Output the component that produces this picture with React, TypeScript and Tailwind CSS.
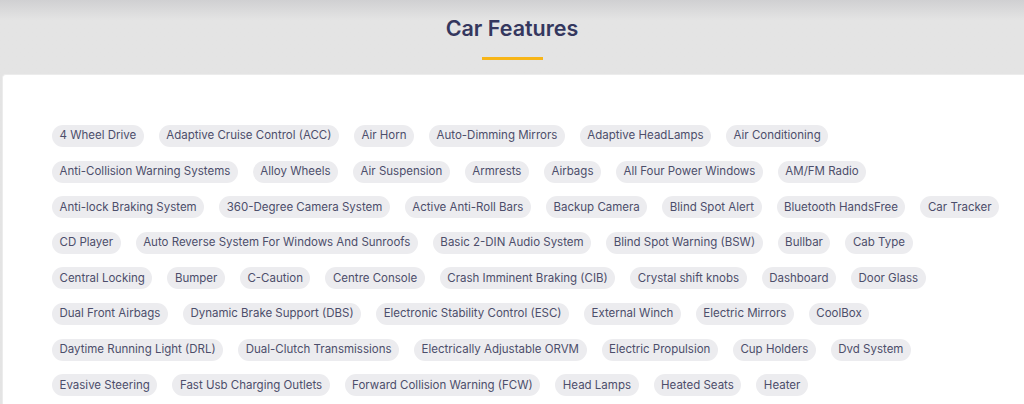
const rows: string[][] = [
  ["4 Wheel Drive", "Adaptive Cruise Control (ACC)", "Air Horn", "Auto-Dimming Mirrors", "Adaptive HeadLamps", "Air Conditioning"],
  ["Anti-Collision Warning Systems", "Alloy Wheels", "Air Suspension", "Armrests", "Airbags", "All Four Power Windows", "AM/FM Radio"],
  ["Anti-lock Braking System", "360-Degree Camera System", "Active Anti-Roll Bars", "Backup Camera", "Blind Spot Alert", "Bluetooth HandsFree", "Car Tracker"],
  ["CD Player", "Auto Reverse System For Windows And Sunroofs", "Basic 2-DIN Audio System", "Blind Spot Warning (BSW)", "Bullbar", "Cab Type"],
  ["Central Locking", "Bumper", "C-Caution", "Centre Console", "Crash Imminent Braking (CIB)", "Crystal shift knobs", "Dashboard", "Door Glass"],
  ["Dual Front Airbags", "Dynamic Brake Support (DBS)", "Electronic Stability Control (ESC)", "External Winch", "Electric Mirrors", "CoolBox"],
  ["Daytime Running Light (DRL)", "Dual-Clutch Transmissions", "Electrically Adjustable ORVM", "Electric Propulsion", "Cup Holders", "Dvd System"],
  ["Evasive Steering", "Fast Usb Charging Outlets", "Forward Collision Warning (FCW)", "Head Lamps", "Heated Seats", "Heater"],
];

export default function App() {
  return (
    <div className="h-[404px] w-[1024px] overflow-hidden bg-gradient-to-b from-[#d0d0d2] from-0% to-[#e4e4e4] to-[5%] font-['Inter',sans-serif]">
      <div className="flex h-[74px] flex-col items-center">
        <h2 className="mt-[14px] text-[21.5px] font-semibold leading-[28px] text-[#34375e]">
          Car Features
        </h2>
        <div className="mt-[15px] h-[3px] w-[61px] bg-[#f7b518]" />
      </div>
      <div className="ml-[2px] h-[330px] rounded-tl-[4px] border-l border-t border-[#ececec] bg-white pl-[49px] pt-[50px]">
        <div className="flex flex-col gap-[13.6px]">
          {rows.map((row, i) => (
            <div key={i} className="flex gap-[15px]">
              {row.map((tag) => (
                <span
                  key={tag}
                  className="flex h-[22px] shrink-0 items-center whitespace-nowrap rounded-full bg-[#ececef] px-[7.5px] text-[11.5px] text-[#4c4e6b]"
                >
                  {tag}
                </span>
              ))}
            </div>
          ))}
        </div>
      </div>
    </div>
  );
}
